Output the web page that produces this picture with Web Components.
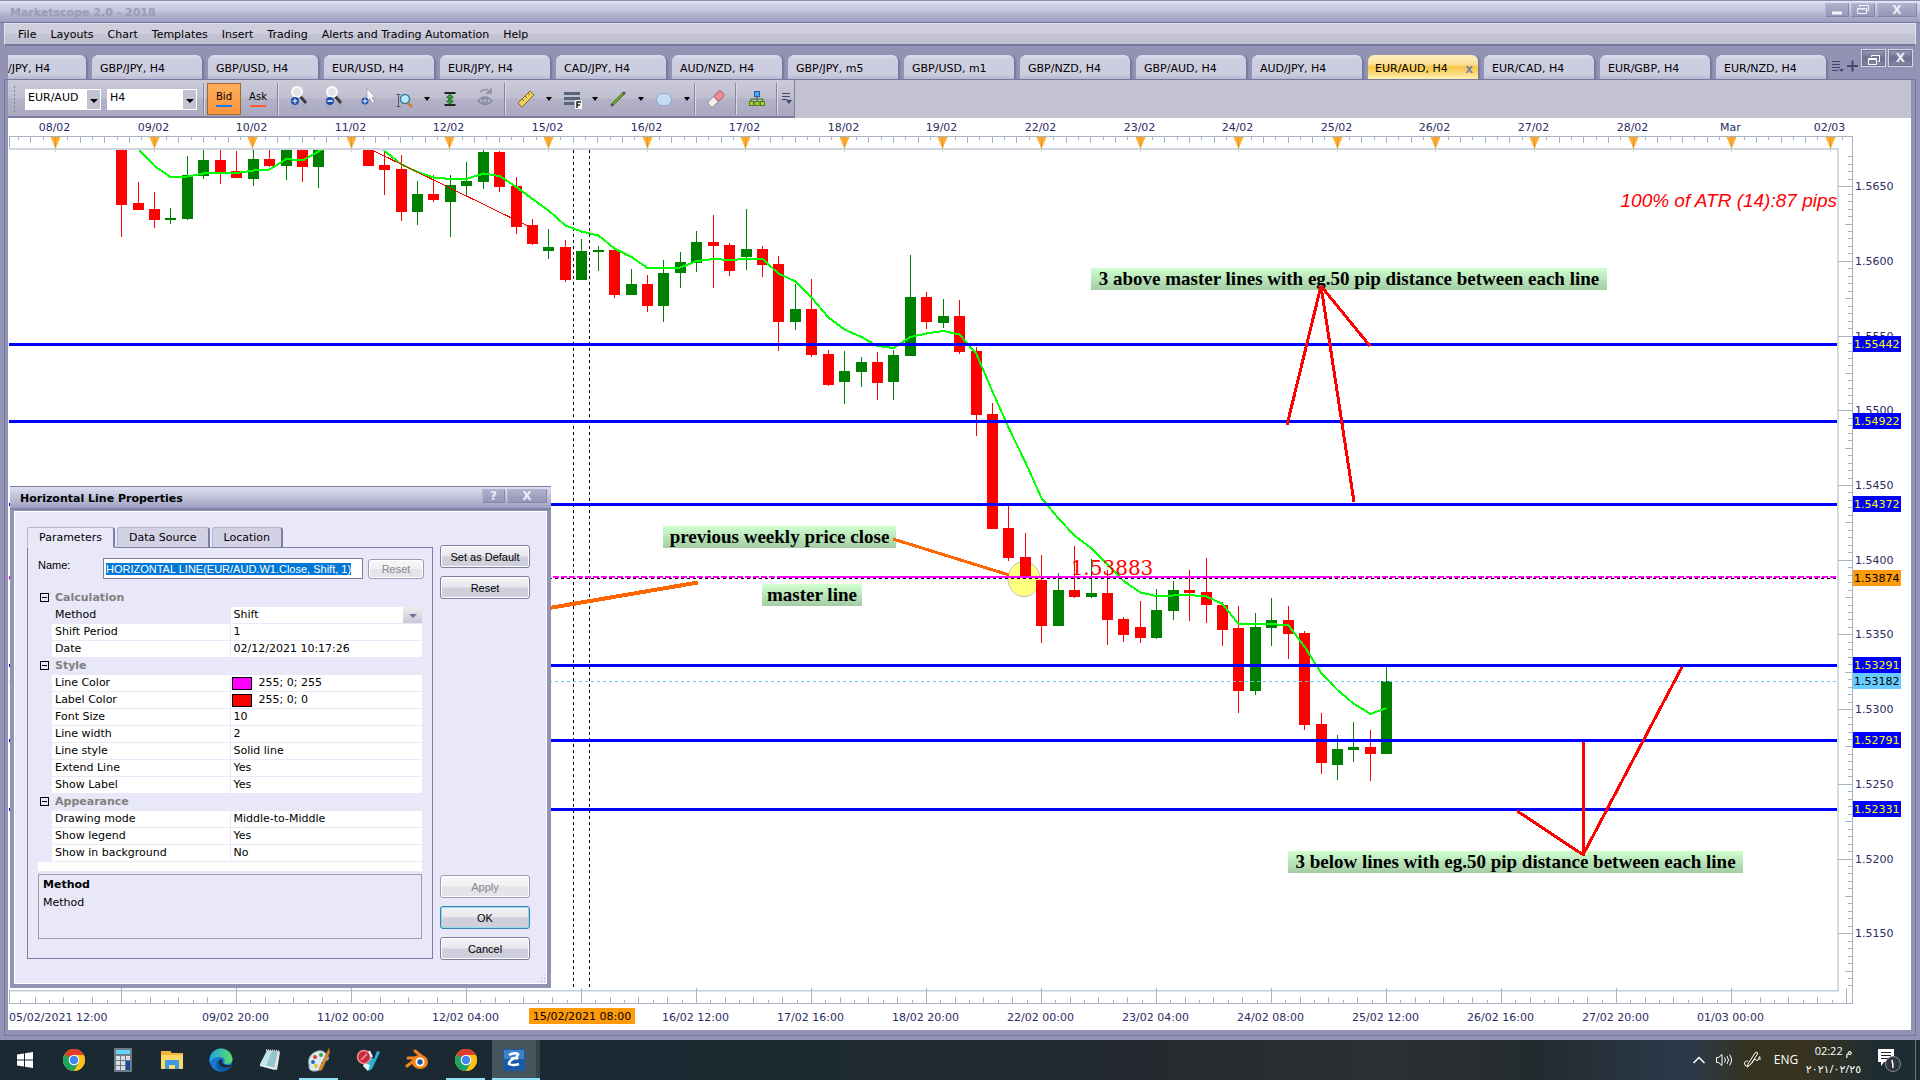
<!DOCTYPE html>
<html lang="en">
<head>
<meta charset="utf-8">
<title>Marketscope 2.0 - 2018</title>
<style>
html,body{margin:0;height:100%;overflow:hidden}
body{display:flex;flex-direction:column;font:11px/16px "DejaVu Sans",sans-serif;color:#000;background:#9394b5}
market-window{flex:1;min-height:0}
</style>
</head>
<body>
<market-window></market-window>
<task-bar></task-bar>
<script>
const define=(name,html,init)=>{
  const t=document.createElement('template');
  t.innerHTML='<style>*{box-sizing:border-box}button,select,input{font:inherit;color:inherit;margin:0}</style>'+html;
  customElements.define(name,class extends HTMLElement{
    constructor(){super();this.attachShadow({mode:'open'}).append(t.content.cloneNode(true));}
    connectedCallback(){if(init&&!this.ready){this.ready=true;init(this,this.shadowRoot);}}
  });
};

/* ---------- caption buttons and plain push button ---------- */
define('caption-button',`<style>
:host{display:block;width:24px;height:14px}
button{display:flex;align-items:center;justify-content:center;width:100%;height:100%;padding:0;border:1px solid #8586a8;border-top-color:#b4b5d0;border-left-color:#b4b5d0;background:linear-gradient(#aeafcc,#9697b9);color:#eeeef8;font:bold 12px/12px "DejaVu Sans",sans-serif}
:host([raised]) button{background:linear-gradient(#9b9cb4,#6f7092 50%,#86879f);border:1px solid #d5d5e6;outline:1px solid #6f7092;outline-offset:-2px}
</style><button aria-label="window control"><slot></slot></button>`);

define('push-button',`<style>
:host{display:block;height:23px}
button{width:100%;height:100%;padding:0;border:1px solid #7d7da0;border-radius:3px;box-shadow:inset 0 0 0 1px #fff;background:linear-gradient(#f4f4f8,#e6e6ec 48%,#cfcfdb 52%,#d0d0dc);font:11px/16px "Liberation Sans",sans-serif;color:#000}
:host([off]) button{color:#8a8a8a;border-color:#9c9cb8;background:linear-gradient(#f8f8fa,#f0f0f3 48%,#e3e3e8 52%,#e4e4ea)}
:host([primary]) button{border-color:#3c7fb1;box-shadow:inset 0 0 0 1px #8fdcf2}
</style><button><slot></slot></button>`,(h,r)=>{if(h.hasAttribute('off'))r.querySelector('button').disabled=true;});

/* ---------- title bar ---------- */
define('title-bar',`<style>
:host{display:flex;height:23px;flex:none;align-items:center;padding:0 3px 2px 10px;gap:2px;border-top:1px solid #8c8db0;border-bottom:1px solid #7577a0;background:linear-gradient(#e4e4f4,#d0d1e6 20%,#c5c6de 45%,#b0b2cf 65%,#9c9dbf)}
h1{flex:1;margin:0;padding-top:4px;font:bold 11px/16px "DejaVu Sans",sans-serif;color:#9a9bb6}
caption-button{margin-bottom:2px}
caption-button:last-of-type{width:40px}
</style>
<h1>Marketscope 2.0 - 2018</h1>
<caption-button><svg width="12" height="10"><path d="M1 8h10" stroke="#f4f4fb" stroke-width="3"/></svg></caption-button>
<caption-button><svg width="14" height="11" fill="none" stroke="#f4f4fb"><path d="M3.500 3V1.500h9v5H11M1.500 4.500h9v5h-9zM1 5h10" /></svg></caption-button>
<caption-button>X</caption-button>`);

/* ---------- menu ---------- */
define('menu-bar',`<style>
:host{display:flex;flex:none;height:23px;margin:0 4px;align-items:center;padding:2px 0 0 13px;gap:14px;border:1px solid #e2e2ec;border-bottom:2px solid #75779b;background:linear-gradient(#cfcedd 50%,#c5c4d4 52%,#bfbecf)}
a{color:#000;text-decoration:none}
</style>
<a href="#">File</a><a href="#">Layouts</a><a href="#">Chart</a><a href="#">Templates</a><a href="#">Insert</a><a href="#">Trading</a><a href="#">Alerts and Trading Automation</a><a href="#">Help</a>`);

/* ---------- chart tabs ---------- */
define('chart-tab',`<style>
:host{display:block;flex:none;width:110px;height:24px}
button{display:flex;align-items:center;justify-content:space-between;width:100%;height:100%;padding:3px 5px 0 8px;border:0;border-radius:6px 6px 0 0;background:linear-gradient(#dddcec,#cdcde0 20%,#cdcce0 80%,#b9b9d0);box-shadow:2px 1px 2px #74769c;text-align:left;white-space:nowrap}
:host([first]){width:78px}
:host([first]) button{padding-left:0;border-radius:0 6px 0 0}
:host([active]) button{padding-left:7px;background:linear-gradient(#fdf0c0,#fbe09a 38%,#f8c64a 50%,#fbd976 75%,#fdf2b4)}
b{display:none;color:#8183a6;font:bold 12px/12px "DejaVu Sans",sans-serif}
:host([active]) b{display:block}
</style><button><slot></slot><b>x</b></button>`);

define('tab-strip',`<style>
:host{display:flex;flex:none;height:34px;margin:0 4px;padding-left:4px;align-items:flex-end;background:#9192b4;border-bottom:1px solid #7577a0}
nav{display:flex;gap:6px;flex:none}
.end{display:flex;flex:1;align-self:stretch;justify-content:flex-end;padding:3px 3px 0 0;gap:2px}
.end svg{flex:none;align-self:flex-end}
caption-button{width:25px;height:18px}
</style><nav></nav>
<div class="end"><svg width="28" height="20" fill="none" stroke="#44456a"><path d="M1 2.500h8M1 5.500h8M1 8.500h8M1 11.500h6"/><path d="M8 10h5l-2.500 3z" fill="#44456a" stroke="none"/><path d="M21.500 1.500v11M16 7h11" stroke-width="2"/></svg>
<caption-button raised><svg width="14" height="12" fill="none" stroke="#fff"><path d="M4.500 3V1.500h8v6H11M1.500 4.500h8v6h-8zM1 5.500h9"/></svg></caption-button><caption-button raised>X</caption-button></div>`,(h,r)=>{
  const names=['/JPY, H4','GBP/JPY, H4','GBP/USD, H4','EUR/USD, H4','EUR/JPY, H4','CAD/JPY, H4','AUD/NZD, H4','GBP/JPY, m5','GBP/USD, m1','GBP/NZD, H4','GBP/AUD, H4','AUD/JPY, H4','EUR/AUD, H4','EUR/CAD, H4','EUR/GBP, H4','EUR/NZD, H4'];
  r.querySelector('nav').innerHTML=names.map((n,i)=>`<chart-tab${i===0?' first':''}${i===12?' active':''}>${n}</chart-tab>`).join('');
});

/* ---------- toolbar ---------- */
define('tool-bar',`<style>
:host{display:flex;flex:none;height:38px;background:#c3c2d1}
.bar{display:flex;align-items:center;width:787px;padding:2px 0 0 4px;background:linear-gradient(#cbcad9,#c0bfd0 50%,#b4b3c8 52%,#a9a8c0);border:solid #7d7ea2;border-width:0 1px 2px 0}
.grip{width:5px;height:28px;background:radial-gradient(circle,#80819f 1px,transparent 1px) 0 0/5px 4px;margin-right:8px}
.pick{position:relative;display:flex;height:21px;background:#fff;margin-right:6px}
.pick+.pick{margin-right:4px}
select{appearance:none;border:0;background:none;height:21px;padding:0 0 2px 3px;width:100%;outline:0;border-radius:0}
.pick i{position:absolute;right:1px;top:1px;width:13px;height:19px;background:#c3c2d1;pointer-events:none}
.pick i::after{content:"";position:absolute;left:3px;top:9px;border:4px solid transparent;border-top:4px solid #000;border-bottom:0}
hr{width:2px;height:32px;border:0;border-left:1px solid #8586a6;border-right:1px solid #d8d8e6;margin:0 2px;flex:none}
button{border:0;background:none;padding:0;height:32px;width:35px;flex:none;display:flex;align-items:center;justify-content:center}
.side{width:34px;flex-direction:column;gap:2px;font-size:10px;line-height:12px}
.side::after{content:"";width:16px;height:2px;background:#ff6030}
.bid{background:linear-gradient(#ffad5c,#fb963c);border:1px solid #a3692c}
.bid::after{background:#0a7bff}
.drop{width:11px}
.drop::after{content:"";border:3px solid transparent;border-top:4px solid #000;border-bottom:0}
.more{flex:1}
</style>
<div class="bar" role="toolbar"><span class="grip"></span>
<label class="pick" style="width:76px"><select aria-label="Instrument"><option>EUR/AUD</option></select><i></i></label>
<label class="pick" style="width:90px"><select aria-label="Period"><option>H4</option></select><i></i></label>
<hr><button class="side bid">Bid</button><button class="side">Ask</button><hr>
<button aria-label="Zoom in"><svg width="24" height="26"><path d="M6 20l3 4M16 19l4 4" stroke="#a3a8c4" stroke-width="3"/><path d="M13 10l6 7" stroke="#3c3c3c" stroke-width="3"/><circle cx="10" cy="6" r="5" fill="#e3e3e8" stroke="#fbfbfb" stroke-width="2"/><circle cx="8" cy="15" r="4" fill="#1d4fae"/><path d="M8 12.500v5M5.500 15h5" stroke="#fff"/></svg></button>
<button aria-label="Zoom out"><svg width="24" height="26"><path d="M6 20l3 4M16 19l4 4" stroke="#a3a8c4" stroke-width="3"/><path d="M13 10l6 7" stroke="#3c3c3c" stroke-width="3"/><circle cx="10" cy="6" r="5" fill="#e3e3e8" stroke="#fbfbfb" stroke-width="2"/><circle cx="8" cy="15" r="4" fill="#1d4fae"/><path d="M5.500 15h5" stroke="#fff" stroke-width="1.500"/></svg></button>
<button aria-label="Pointer"><svg width="24" height="26"><path d="M7 20l3 4" stroke="#a3a8c4" stroke-width="3"/><path d="M10 2l8 9-3 .5 2.500 5-2.500 1-2-5-3 2.500z" fill="#f6f6f6" stroke="#9898a8" stroke-width=".7"/><circle cx="8" cy="15" r="3.500" fill="#1d4fae"/><path d="M8 12.500v5M5.500 15h5" stroke="#fff"/></svg></button>
<button aria-label="Zoom box"><svg width="24" height="26" fill="none"><path d="M6.500 8v13M4.500 8.500h4M4.500 20.500h4" stroke="#555"/><circle cx="13" cy="13" r="4.500" fill="#bde6f6" stroke="#2e7f9e" stroke-width="1.500"/><path d="M16 17l4 4" stroke="#d08020" stroke-width="2.500"/></svg></button><button class="drop" aria-label="More"></button>
<button aria-label="Fit"><svg width="24" height="26"><path d="M6.500 7h11M6.500 19h11" stroke="#222" stroke-width="2"/><path d="M12 8l3.500 3.500h-2V15h2L12 18.500 8.500 15h2v-3.500h-2z" fill="#2f9a2f" stroke="#155515" stroke-width=".6"/></svg></button>
<button aria-label="Auto scroll"><svg width="24" height="26" fill="none" stroke="#8a8aa2" stroke-width="1.500"><path d="M5 15q7-8 14 0q-7 7-14 0z"/><circle cx="12" cy="14.500" r="2.500"/><path d="M7 6q6-5 10 0M18 2v5h-5"/></svg></button><hr>
<button aria-label="Ruler"><svg width="24" height="26"><path d="M4 17L16 5l4 4L8 21z" fill="#f0cf62" stroke="#8c6a1c"/><path d="M8 13l2 2M11 10l2 2M14 7l2 2" stroke="#8c6a1c"/></svg></button><button class="drop" aria-label="More"></button>
<button aria-label="Fibonacci"><svg width="24" height="26"><path d="M4 7.500h16M4 12.500h16M4 17.500h10" stroke="#56657a" stroke-width="3"/><path d="M15 14h7v9h-7z" fill="#f4f4f8"/><path d="M17 22v-6h4M17 19h3" stroke="#222" stroke-width="1.500" fill="none"/></svg></button><button class="drop" aria-label="More"></button>
<button aria-label="Line"><svg width="24" height="26"><path d="M6 19L18 7" stroke="#4c7a1c" stroke-width="3"/><path d="M6 19L18 7" stroke="#8fca3c"/><circle cx="6" cy="19" r="1.500" fill="#555"/><circle cx="18" cy="7" r="1.500" fill="#555"/></svg></button><button class="drop" aria-label="More"></button>
<button aria-label="Ellipse"><svg width="24" height="26"><rect x="4.500" y="7.500" width="15" height="12" rx="6" fill="#c5dcf2" stroke="#8aa8cc"/></svg></button><button class="drop" aria-label="More"></button><hr>
<button aria-label="Eraser"><svg width="24" height="26"><g transform="rotate(-45 12 13)"><rect x="3" y="9.500" width="10" height="7" rx="2" fill="#f3f1ef" stroke="#999"/><rect x="12" y="9.500" width="9" height="7" rx="2" fill="#ee8d96" stroke="#b36570"/></g></svg></button><hr>
<button aria-label="Hierarchy"><svg width="24" height="26"><path d="M12 9v4M6 17v-4h12v4M12 13v4" stroke="#3a6a1a" fill="none"/><rect x="9.500" y="5.500" width="5" height="5" fill="#48a8f0" stroke="#1c5fa8"/><g fill="#a8d82e" stroke="#4f7c12"><rect x="4.500" y="15.500" width="4" height="4"/><rect x="10" y="15.500" width="4" height="4"/><rect x="15.500" y="15.500" width="4" height="4"/></g></svg></button><hr>
<button class="more" aria-label="Options"><svg width="10" height="14"><path d="M0 1.500h8M0 4.500h8M0 7.500h5" stroke="#44456a"/><path d="M4 8h6l-3 4z" fill="#44456a"/></svg></button>
</div>`);

/* ---------- chart ---------- */
const CANDLES=[
/* colour, high, body top, body bottom, low */
'R 150 150 205 237','R 182 203 210 210','R 192 209 220 228','G 208 218 220 224','G 156 175 219 220','G 150 160 176 179','R 150 160 173 184','R 151 171 178 178','G 150 159 179 186','R 150 159 166 167','G 150 150 166 180','R 150 150 167 182','G 150 150 167 188',0,0,
'R 150 150 166 166','R 152 165 170 195','R 155 169 212 221','G 181 194 212 225','R 175 194 200 202','G 175 185 202 237','G 162 181 186 196','G 150 152 182 189','R 151 152 187 192','R 177 186 227 234','R 219 225 244 245','G 229 247 251 259','R 240 247 280 282','G 239 251 280 280','G 246 250 252 271','R 250 250 295 298','G 269 284 295 295',
'R 275 284 306 312','G 260 273 306 322','G 252 262 273 288','G 231 242 263 272','R 215 242 246 288','R 243 245 271 276','G 209 249 257 270','R 246 249 265 277','R 256 264 322 351','G 284 309 322 330','R 279 309 355 357','R 350 354 385 386','G 351 371 382 404','G 357 362 372 387','R 352 362 383 400','G 350 355 382 400','G 255 297 356 356','R 292 297 322 329','G 299 316 323 328','R 300 316 352 354','R 347 351 415 436',
'R 403 414 529 529','R 505 528 558 561','R 533 557 576 576','R 555 580 626 643','G 573 590 626 626','R 546 590 597 598','G 559 593 597 598','R 570 593 620 645','R 617 619 635 642','R 601 627 638 643','G 589 610 638 639','G 581 590 611 620','R 570 590 593 621','R 558 592 605 623','R 602 605 630 646','R 606 628 691 713','G 613 627 691 695','G 598 620 628 646','R 606 620 634 659','R 631 633 725 730','R 713 724 763 774','G 735 749 765 780','G 722 747 750 762','R 730 747 754 781','G 667 681 754 754'];
const AVERAGE=[[1,149,166,177,176.5,173.5,173,173,170.5,169.5,159,160.5,151.5,140],[15,135,151,164.5,172,177.5,179,179,173.5,176,187,199,210.5,225.5,231.5,235.5,248.5,257,268,268,267.5,261,259,260,259,259,273.5,281.5,297.5,317.5,329.5,337,346,348,337,333.5,331,334.5,354,391.5,427.5,462.5,498,518.5,535.5,548.5,564.5,581,592.5,596,595.5,595,596.5,604,624,624,624,625.5,646.5,673.5,690,703.5,714,708]];
define('price-chart',`<style>
:host{display:block;flex:1;min-height:0;background:#fff}
svg{display:block;width:100%;height:100%}
text{font:11px "DejaVu Sans",sans-serif;fill:#2b2b66}
text.tag{fill:#ff0}
text.dark{fill:#000}
text.note{font:bold 19px "Liberation Serif",serif;fill:#000}
text.atr{font:italic 19px "Liberation Sans",sans-serif;fill:#f00}
text.close{font:20px "DejaVu Serif",serif;fill:#f00}
</style>
<svg viewBox="8 118 1903 912" preserveAspectRatio="xMinYMin meet">
<defs><linearGradient id="note" x2="0" y2="1"><stop stop-color="#cfffcf"/><stop offset="1" stop-color="#a4cca4"/></linearGradient><clipPath id="plot"><rect x="9" y="150" width="1828" height="839"/></clipPath></defs>
<g id="axes" shape-rendering="crispEdges"></g>
<g id="body" clip-path="url(#plot)"></g><g id="labels"></g></svg>`,(h,r)=>{
  const $=id=>r.getElementById(id), X=k=>Math.round(121.2+16.43*k);
  const L=(x1,y1,x2,y2,c,w=1,e='')=>`<path d="M${x1} ${y1}L${x2} ${y2}" stroke="${c}" stroke-width="${w}" fill="none" ${e}/>`;
  const crisp='shape-rendering="crispEdges"';
  let a='',t='',g='#a9b4c2';
  a+=L(9,136.5,1853,136.5,g)+L(9.5,136,9.5,148,g)+L(9,149,1839,149,'#cfd6e0',2)+L(1838,149,1838,991,'#d3dae3',2)+L(9,990.5,1839,990.5,'#c2cedc')+L(9,991.5,1839,991.5,'#e0e6ee')+L(1852.5,136,1852.5,1004,g)+L(9,1003.5,1853,1003.5,g)+L(9.5,991,9.5,1004,g);
  const days=['08/02','09/02','10/02','11/02','12/02','15/02','16/02','17/02','18/02','19/02','22/02','23/02','24/02','25/02','26/02','27/02','28/02','Mar','02/03'];
  for(let i=-3;i<=145;i++){const x=Math.floor(55.5+98.6*i/8)+.5;
    if(i%8) a+=L(x,137,x,i%2?140:143,g);
    else{a+=L(x,148,x,152,'#c2cedc');t+=`<path d="M${x-5} 137h10L${x} 149z" fill="#ffab2e"/>`+L(x,137,x,148,'#dd9a3a')+`<text x="${x-1}" y="131" text-anchor="middle">${days[i/8]}</text>`;}
  }
  const hours=['','09/02 20:00','11/02 00:00','12/02 04:00','','16/02 12:00','17/02 16:00','18/02 20:00','22/02 00:00','23/02 04:00','24/02 08:00','25/02 12:00','26/02 16:00','27/02 20:00','01/03 00:00'];
  for(let i=-7;i<=120;i++){const x=Math.floor(121.4+14.375*i)+.5;
    a+=L(x,i%8?(i%2?1000:997):988,x,1003,g);
    if(i>=0&&i%8===0&&hours[i/8]) t+=`<text x="${x-1}" y="1021" text-anchor="middle">${hours[i/8]}</text>`;
  }
  t+='<text x="9" y="1021">05/02/2021 12:00</text><rect x="529" y="1008" width="106" height="16" fill="#ff9b0a"/><text class="dark" x="582" y="1020" text-anchor="middle">15/02/2021 08:00</text>';
  for(let i=-4;i<=107;i++){const y=Math.floor(186.7+7.47*i)+.5;
    a+=L(i%10===0?1838:i%5===0?1845:1848,y,1852,y,g);
    if(i>=0&&i%10===0) t+=`<text x="1855" y="${Math.floor(y+4)}">${(1.565-i*.0005).toFixed(4)}</text>`;
  }
  $('axes').innerHTML=a;
  let b=L(573.5,150,573.5,987,'#000',1,crisp+' stroke-dasharray="3 3"')+L(589.5,150,589.5,987,'#000',1,crisp+' stroke-dasharray="3 3"');
  b+='<ellipse cx="1024" cy="579" rx="16" ry="17.500" fill="#ffff80" stroke="#bdbdbd"/>';
  CANDLES.forEach((c,k)=>{if(!c)return;const [q,hi,o,cl,lo]=c.split(' '),f=q==='R'?'#f00':'#008000',x=X(k);
    b+=`<path ${crisp} fill="${f}" d="M${x} ${hi}h1V${lo}h-1zM${x-5} ${o}h11V${cl}h-11z"/>`;});
  AVERAGE.forEach(([k0,...ys])=>{b+=`<polyline ${crisp} fill="none" stroke="#0f0" stroke-width="2" points="${ys.map((y,i)=>(X(k0+i)+.5)+','+y).join(' ')}"/>`;});
  b+=L(372,150,528,226,'#f00',1,crisp);
  [344.5,421.5,504.5,665.5,740.5,809.5].forEach(y=>b+=L(9,y,1838,y,'#00f',3,crisp));
  b+=L(9,681.5,1838,681.5,'#66c4ec',1,crisp+' stroke-dasharray="3 3"');
  b+=L(9,577,779,577,'#f0f',2,crisp+' stroke-dasharray="6 2"')+L(779,577,1326,577,'#f0f',2,crisp)+L(1326,577,1838,577,'#f0f',2,crisp+' stroke-dasharray="6 2"')+L(9,578.5,1838,578.5,'#000',1,crisp+' stroke-dasharray="3 3"');
  b+='<text class="close" x="1112" y="575" text-anchor="middle">1.53883</text><text class="atr" x="1837" y="207" text-anchor="end">100% of ATR (14):87 pips</text>';
  [[1091,268,516,'3 above master lines with eg.50 pip distance between each line'],[1288,851,455,'3 below lines with eg.50 pip distance between each line'],[663,526,233,'previous weekly price close'],[762,584,100,'master line']].forEach(([x,y,w,s])=>
    b+=`<rect x="${x}" y="${y}" width="${w}" height="22" fill="url(#note)"/><text class="note" x="${x+w/2}" y="${y+17}" text-anchor="middle">${s}</text>`);
  b+=L(893,539,1009,575,'#f60',3,crisp)+L(520,613,698,582.5,'#f60',4,crisp);
  [[1321,286,1370,346],[1321,286,1287,425],[1321,286,1354,502],[1583.5,855,1517,811],[1583.5,856,1583.5,742],[1583.5,854,1682,667]].forEach(p=>b+=L(...p,'#f00',3,crisp));
  $('body').innerHTML=b;
  [[344.5,'1.55442'],[421.5,'1.54922'],[504.5,'1.54372'],[578.5,'1.53874','#ff9b0a'],[665.5,'1.53291'],[681.5,'1.53182','#6cf'],[740.5,'1.52791'],[809.5,'1.52331']].forEach(([y,s,c])=>
    t+=`<rect x="1853" y="${y-8.5}" width="48" height="16" fill="${c||'#00f'}"/><text class="${c?'dark':'tag'}" x="1854" y="${y+3.5}">${s}</text>`);
  $('labels').innerHTML=t;
});

/* ---------- property grid ---------- */
define('property-grid',`<style>
:host{display:block}
table{width:100%;border-collapse:collapse;table-layout:fixed}
col.gut{width:14px}col.key{width:178px}
tr{height:17px}
td,th{padding:0 3px;height:17px;line-height:15px;text-align:left;font-weight:normal;border-bottom:1px solid #e8e8f8;white-space:nowrap}
tbody th,tbody td{background:#fff}
tbody td.gut,tr.sel th,tr.head th{background:none}
td.gut{padding:0 0 0 2px}
td:last-child{border-left:1px solid #e8e8f8}
tr.head th{font-weight:bold;color:#808080}
tr.rest td{height:10px;border:0}tr.rest{height:10px}
.box{display:block;width:9px;height:9px;border:1px solid #000;background:linear-gradient(#000,#000) center/5px 1px no-repeat}
.sw{display:inline-block;width:20px;height:13px;border:1px solid #000;margin:0 7px 0 -2px;vertical-align:middle}
.pick{position:relative;display:block;height:16px;margin-right:-3px}
select{appearance:none;border:0;background:none;padding:0;width:100%;height:16px;line-height:15px}
.pick i{position:absolute;right:0;top:0;width:19px;height:16px;background:linear-gradient(#eee,#c8c8d4);pointer-events:none}
.pick i::after{content:"";position:absolute;left:6px;top:7px;border:4px solid transparent;border-top:4px solid #6e7096;border-bottom:0}
</style><table><colgroup><col class="gut"><col class="key"><col></colgroup><tbody></tbody></table>`,(h,r)=>{
  const rows=[['Calculation'],['Method','Shift'],['Shift Period','1'],['Date','02/12/2021 10:17:26'],['Style'],['Line Color','255; 0; 255','#f0f'],['Label Color','255; 0; 0','#f00'],['Font Size','10'],['Line width','2'],['Line style','Solid line'],['Extend Line','Yes'],['Show Label','Yes'],['Appearance'],['Drawing mode','Middle-to-Middle'],['Show legend','Yes'],['Show in background','No']];
  r.querySelector('tbody').innerHTML=rows.map(([k,v,c],i)=>v?`<tr class="${i===1?'sel':''}"><td class="gut"></td><th scope="row">${k}</th><td>${i===1?'<span class="pick"><select aria-label="Method"><option>Shift</option></select><i></i></span>':(c?`<span class="sw" style="background:${c}"></span>`:'')+v}</td></tr>`:`<tr class="head"><td class="gut"><span class="box"></span></td><th colspan="2">${k}</th></tr>`).join('')+'<tr class="rest"><td colspan="3"></td></tr>';
});

/* ---------- dialog ---------- */
define('line-dialog',`<style>
:host{position:absolute;left:10px;top:486px;width:541px;height:502px;display:flex;flex-direction:column;background:#9394b5;padding:0 4px 4px;border:1px solid #7d7ea2;border-width:1px 0 0}
header{display:flex;align-items:center;gap:2px;height:23px;flex:none;margin:0 -4px 1px;padding:0 4px 3px 10px;border-bottom:2px solid #8183a6;background:linear-gradient(#dedeee,#c5c6de 40%,#9fa0c1)}
h2{flex:1;margin:0;padding-top:5px;font:bold 11px/16px "DejaVu Sans",sans-serif}
caption-button{width:23px}caption-button:last-of-type{width:40px}
main{flex:1;min-height:0;display:flex;gap:7px;padding:15px 16px 24px 12px;background:#e8e8f8;border:1px solid #fff;position:relative}
.left{flex:1;display:flex;flex-direction:column}
nav{display:flex;gap:2px;margin-bottom:-1px;position:relative}
nav button{height:21px;padding:0 11px;border:1px solid #b5b5cc;border-width:1px 2px 0 1px;border-right-color:#7d7da5;border-radius:3px 3px 0 0;background:#d2d2e4;border-bottom:1px solid #7d7da5}
nav button:first-child{background:#e8e8f8;border-bottom-color:#e8e8f8;}
.panel{flex:1;border:1px solid #7d7da5;padding:10px 10px 19px;display:flex;flex-direction:column}
.name{display:flex;align-items:center;height:21px;margin:0 -2px 10px 0}
.name label{width:65px;font:11px/12px "Liberation Sans",sans-serif;align-self:flex-start;padding-top:1px}
.name input{flex:1;min-width:0;height:21px;padding:0 2px;border:1px solid #7d7da5;background:#fff;font:11px/13px "Liberation Sans",sans-serif;margin-right:5px;border-radius:0;outline:0}
.name input::selection{background:#0078d7;color:#fff}
.name push-button{width:56px;height:20px}
.desc{flex:1;margin-top:3px;border:1px solid #a0a0a0;padding:1px 4px}
.desc p,.desc h3{margin:0;font-size:11px;line-height:18px}
.right{width:90px;display:flex;flex-direction:column;gap:8px;padding-top:18px;margin-bottom:-1px}
.gap{flex:1}
.size{position:absolute;right:0;bottom:0;width:9px;height:9px;background:radial-gradient(circle,#9fa0ba 1px,transparent 1px) 0 0/3px 3px;clip-path:polygon(100% 0,100% 100%,0 100%)}
</style>
<header><h2>Horizontal Line Properties</h2><caption-button>?</caption-button><caption-button>X</caption-button></header>
<main><div class="left"><nav><button>Parameters</button><button>Data Source</button><button>Location</button></nav>
<section class="panel"><div class="name"><label for="n">Name:</label><input id="n" value="HORIZONTAL LINE(EUR/AUD.W1.Close, Shift, 1)"><push-button off>Reset</push-button></div>
<property-grid></property-grid><div class="desc"><h3>Method</h3><p>Method</p></div></section></div>
<div class="right"><push-button>Set as Default</push-button><push-button>Reset</push-button><span class="gap"></span><push-button off>Apply</push-button><push-button primary>OK</push-button><push-button>Cancel</push-button></div><span class="size"></span></main>`,(h,r)=>{const n=r.getElementById('n');n.focus({preventScroll:true});n.select();});

/* ---------- window ---------- */
define('market-window',`<style>
:host{display:flex;flex-direction:column;position:relative;background:#9394b5}
.frame{flex:1;min-height:0;display:flex;flex-direction:column;margin:0 4px 4px;padding:0 4px 5px;border:1px solid #75779b;border-width:0 1px 1px 0;box-shadow:inset 1px 0 #75779b}
</style>
<title-bar></title-bar><menu-bar></menu-bar><tab-strip></tab-strip>
<div class="frame"><tool-bar></tool-bar><price-chart></price-chart></div><line-dialog></line-dialog>`);

/* ---------- taskbar ---------- */
define('task-bar',`<style>
:host{display:flex;flex:none;height:40px;align-items:stretch;color:#fff;background:linear-gradient(90deg,#1a2932,#1b2a32 35%,#242a2f 60%,#2d3032 72%,#232b30 80%,#2b3a4b 88%,#35331f 91%,#38331f 94%,#1d2c33 98%)}
button{border:0;background:none;padding:0;width:49px;flex:none;display:flex;align-items:center;justify-content:center;position:relative}
.run::after{content:"";position:absolute;left:5px;right:5px;bottom:0;height:2px;background:#8fe3f7}
.on{width:48px;padding-right:4px;margin-left:2px;background:linear-gradient(90deg,#46545c 44px,#34424a 44px);box-shadow:inset 0 -2px #8fe3f7}
.tray{margin-left:auto;display:flex;align-items:center;padding-right:4px;font:12px/16px "Open Sans","DejaVu Sans",sans-serif}
.tray button{width:25px;height:40px}
.clock{width:57px;text-align:center;line-height:18px;font-size:11px}
.lang{width:38px;text-align:center}
.note{border-right:1px solid #68757b}
.tray .note{width:54px}
</style>
<button aria-label="Start"><svg width="16" height="16" fill="#fff"><path d="M0 2.500l7-1v6H0zM8 1.300L16 0v7.500H8zM0 8.500h7v6l-7-1zM8 8.500h8V16l-8-1.200z"/></svg></button>
<button aria-label="Chrome"><svg width="24" height="24" viewBox="0 0 24 24" class="chrome"><circle cx="12" cy="12" r="11" fill="#fbc116"/><path d="M12 12L2.500 6.500A11 11 0 0 1 21.500 6.500z" fill="#e33b2e"/><path d="M12 12L2.500 6.500A11 11 0 0 0 12 23l5-8z" fill="#1da462"/><path d="M12 7h9.800A11 11 0 0 1 12 23l5-9z" fill="#fbc116"/><circle cx="12" cy="12" r="5.300" fill="#fff"/><circle cx="12" cy="12" r="4.200" fill="#4285f4"/></svg></button>
<button aria-label="Calculator"><svg width="18" height="24"><rect width="18" height="24" rx="1" fill="#6e7c86"/><rect x="2" y="2" width="14" height="4" fill="#62d4f5"/><path d="M2 8h4v4H2zM7 8h4v4H7zM12 8h4v4h-4zM2 13h4v4H2zM7 13h4v4H7zM2 18h4v4H2zM7 18h4v4H7z" fill="#d7dde1"/><path d="M12 13h4v9h-4z" fill="#174b91"/></svg></button>
<button aria-label="Explorer"><svg width="22" height="20"><path d="M0 1h9l2 2h11v16H0z" fill="#f0b73c"/><path d="M0 5h22v14H0z" fill="#fcd667"/><path d="M4 19v-8q0-1 1-1h12q1 0 1 1v8h-4v-4H8v4z" fill="#3c9be0"/></svg></button>
<button aria-label="Edge"><svg width="24" height="24" viewBox="0 0 24 24"><defs><linearGradient id="e"><stop stop-color="#1fa3e6"/><stop offset="1" stop-color="#5fdc60"/></linearGradient></defs><circle cx="12" cy="12" r="11.500" fill="#1478cf"/><path d="M.6 11A11.500 11.500 0 0 1 23.500 11c0 5-5 6-8.500 4.500 2-4-1-7-5-6.500Q4 9 .6 15z" fill="url(#e)"/><path d="M9.500 12q-1 5 5 7 4 1 7.500-1 1 0 .5 1Q18 24 12 23 5 20 8 13z" fill="#0f5aa8"/><path d="M14.500 16q-3-2-1-5-4 0-4 3.500 1 4 6 5 4 .5 6.500-1.500 1-1.500-1-1-3.500 1-6.500-1z" fill="#1b2a32"/></svg></button>
<button aria-label="Notepad"><svg width="24" height="24"><path d="M9 2l12 1-3 18L2 17z" fill="#8fc6cf"/><path d="M9 3l5 0-6 15-6-2z" fill="#c4e4e8"/><path d="M20 3l2 1-3 18-3-1z" fill="#e8e8e0"/><path d="M2 17l15 4" stroke="#e8eef0" stroke-width="2"/><path d="M8 2l13 1" stroke="#ccc" stroke-width="2" stroke-dasharray="1 1"/></svg></button>
<button class="run" aria-label="Paint"><svg width="26" height="26"><path d="M3 18Q1 9 9 5t13 4q2 4-3 5t-3 5-6 5-7-6z" fill="#dbe9f1" stroke="#8aa"/><circle cx="9" cy="10" r="2" fill="#e33"/><circle cx="15" cy="8" r="2" fill="#3a3"/><circle cx="7" cy="15" r="2" fill="#26c"/><circle cx="10" cy="19" r="2" fill="#eb2"/><path d="M23 1l1 4-8 18-3 1 1-4z" fill="#df8b2d" stroke="#8c4e12" stroke-width=".5"/></svg></button>
<button aria-label="Cards"><svg width="24" height="24"><path d="M14 8l4 3 3-8 3 1-8 17-4 2-3-6z" fill="#28b4d8"/><path d="M8 15l6 2-2 6-5-5z" fill="#e9f3f5"/><circle cx="8" cy="9" r="6.500" fill="#c6283c" stroke="#f48a92" stroke-width="1.500"/><path d="M5 12l6-6" stroke="#ef7b86" stroke-width="2"/><path d="M13 3l3 6" stroke="#fff" stroke-width="2"/></svg></button>
<button aria-label="Blender"><svg width="24" height="24"><path d="M10 3l10 8M3 10h11M2 18l9-7" stroke="#f5841f" stroke-width="3" stroke-linecap="round"/><ellipse cx="15" cy="14" rx="8" ry="7" fill="#f5841f"/><circle cx="15" cy="14" r="4.500" fill="#fff"/><circle cx="15" cy="14" r="2.700" fill="#20579a"/></svg></button>
<button class="run" aria-label="Chrome window" id="c2"></button>
<button class="on" aria-label="Marketscope"><svg width="22" height="22"><rect width="22" height="22" rx="1" fill="#1a5aa5"/><rect x="1" y="1" width="20" height="9" fill="#3c80c8"/><path d="M6 6q5-3 9-1 0 3-5 5-4 2-4 5 4 2 10 0M8 10q4-2 7 0" fill="none" stroke="#fff" stroke-width="2.500"/></svg></button>
<div class="tray"><button aria-label="Hidden icons"><svg width="14" height="10"><path d="M1.500 8L7 2.500 12.500 8" stroke="#fff" fill="none" stroke-width="1.500"/></svg></button>
<button aria-label="Volume"><svg width="18" height="14" fill="none" stroke="#fff"><path d="M1.500 4.500h2L7 1.500v11l-3.500-3h-2zM9.500 4.500q2 2.500 0 5M12 3q3 4 0 8M14.500 1.500q4 5.500 0 11"/></svg></button>
<button aria-label="Pen" style="width:31px"><svg width="18" height="18" fill="none" stroke="#fff"><path d="M5 13L12 2q3-2 2.500 1L8 13l-3.500 3zM5 10q-4 0-3.500 3t4 2M9 12q2-5 4-3t3-2 1 2"/></svg></button>
<span class="lang">ENG</span><div class="clock">02:22 م<br>٢٠٢١/٠٢/٢٥</div>
<button class="note" aria-label="Notifications"><svg width="26" height="26"><path d="M2 2h16v13H8l-3 4v-4H2z" fill="#fff"/><path d="M5 5.500h10M5 8.500h10M5 11.500h7" stroke="#222"/><circle cx="17" cy="17" r="7.500" fill="#30373b" stroke="#889"/><path d="M16 13q1 4 1 8" stroke="#fff" stroke-width="1.500" fill="none"/></svg></button></div>`,(h,r)=>r.getElementById('c2').append(r.querySelector('.chrome').cloneNode(true)));
</script>
</body>
</html>
